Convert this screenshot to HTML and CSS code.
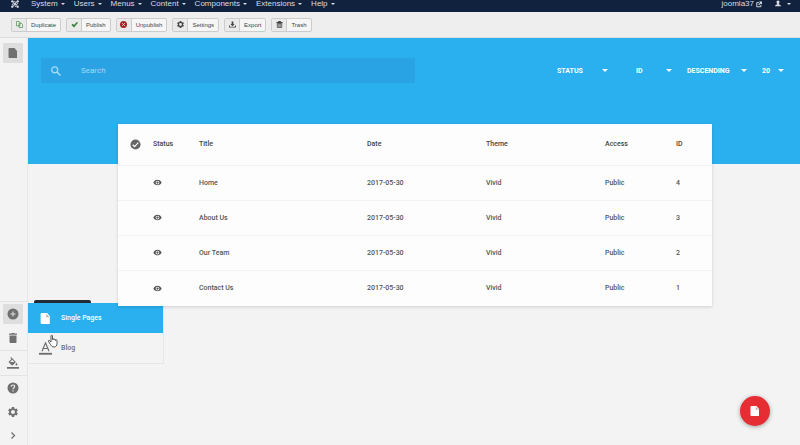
FILE: index.html
```html
<!DOCTYPE html>
<html lang="en">
<head>
    <meta charset="UTF-8">
    <meta name="viewport" content="width=device-width, initial-scale=1.0">
    <title>Pages</title>
    <link rel="stylesheet" href="styles.css">
</head>
<body>
    <!-- Shared icons -->
    <svg class="sprite" aria-hidden="true">
        <symbol id="icon-file" viewBox="0 0 24 24"><path d="M5 2h10l5 6v14H5c-1 0-2-1-2-2V4c0-1 1-2 2-2z"/><path class="fold" d="M13.500 3.500v6H19z"/></symbol>
        <symbol id="icon-eye" viewBox="0 0 24 24"><path fill-rule="evenodd" d="M12 4.500C7 4.500 2.700 7.600 1 12c1.700 4.400 6 7.500 11 7.500s9.300-3.100 11-7.500c-1.700-4.400-6-7.500-11-7.500zM12 17a5 5 0 1 1 0-10 5 5 0 0 1 0 10zm0-8a3 3 0 1 0 0 6 3 3 0 0 0 0-6z"/></symbol>
        <symbol id="icon-trash" viewBox="0 0 24 24"><path d="M5 7v13a2 2 0 0 0 2 2h10a2 2 0 0 0 2-2V7zM20 3h-4.500l-1-1h-5l-1 1H4v2.500h16z"/></symbol>
        <symbol id="icon-gear" viewBox="0 0 24 24"><path fill-rule="evenodd" d="M19.400 13c.1-.7.1-1.300 0-2l2.100-1.600c.2-.2.3-.4.1-.6l-2-3.500c-.1-.2-.4-.3-.6-.2l-2.500 1c-.5-.4-1.100-.7-1.700-1l-.4-2.600c0-.3-.2-.5-.4-.5h-4c-.2 0-.4.2-.4.500l-.4 2.600c-.6.3-1.200.6-1.700 1l-2.500-1c-.2-.1-.5 0-.6.2l-2 3.500c-.2.2-.1.4.1.6L4.600 11c-.1.7-.1 1.300 0 2l-2.100 1.600c-.2.2-.3.4-.1.6l2 3.500c.1.2.4.3.6.2l2.500-1c.5.4 1.100.7 1.700 1l.4 2.600c0 .3.2.5.4.5h4c.2 0 .4-.2.4-.5l.4-2.600c.6-.3 1.200-.6 1.700-1l2.500 1c.2.1.5 0 .6-.2l2-3.500c.2-.2.1-.4-.1-.6zM12 16a4 4 0 1 1 0-8 4 4 0 0 1 0 8z"/></symbol>
    </svg>

    <nav class="navbar">
        <a class="brand" href="#" aria-label="Joomla">
            <svg viewBox="0 0 24 24"><path d="M7 17l-3-4 4-4 8 8M17 7l3 4-4 4-8-8M7 7l4-3 4 4-8 8M17 17l-4 3-4-4 8-8" fill="none" stroke="currentColor" stroke-width="3"/><circle cx="4" cy="4" r="3.500"/><circle cx="20" cy="4" r="3.500"/><circle cx="4" cy="20" r="3.500"/><circle cx="20" cy="20" r="3.500"/></svg>
        </a>
        <ul class="menu">
            <li><a class="caret" href="#">System</a></li>
            <li><a class="caret" href="#">Users</a></li>
            <li><a class="caret" href="#">Menus</a></li>
            <li><a class="caret" href="#">Content</a></li>
            <li><a class="caret" href="#">Components</a></li>
            <li><a class="caret" href="#">Extensions</a></li>
            <li><a class="caret" href="#">Help</a></li>
        </ul>
        <a class="site-link" href="#">joomla37
            <svg viewBox="0 0 16 16"><path d="M8 3H2v11h11V9" fill="none" stroke="currentColor" stroke-width="2.500"/><path d="M8 0h8v8l-3-3-5 5-2-2 5-5z"/></svg>
        </a>
        <a class="user-link caret" href="#" aria-label="User menu">
            <svg viewBox="0 0 16 16"><path d="M8 0c3 0 4 2 4 4 0 2-1 4-2 5v1c2 1 6 2 6 5H0c0-3 4-4 6-5V9C5 8 4 6 4 4c0-2 1-4 4-4z"/></svg>
        </a>
    </nav>

    <div class="toolbar">
        <button class="tool"><span class="tool-icon green"><svg viewBox="0 0 16 16"><path d="M1 1h6l2 3v7H1zM7 5h5l3 3v7H7z" fill="#eee" stroke="currentColor" stroke-width="1.500"/></svg></span><span class="tool-text">Duplicate</span></button>
        <button class="tool"><span class="tool-icon green"><svg viewBox="0 0 16 16"><path d="M1 9l3-3 3 3 6-7 3 2-9 11z"/></svg></span><span class="tool-text">Publish</span></button>
        <button class="tool"><span class="tool-icon red"><svg viewBox="0 0 16 16"><circle cx="8" cy="8" r="8"/><path d="M5 5l6 6M11 5l-6 6" stroke="#eee" stroke-width="2"/></svg></span><span class="tool-text">Unpublish</span></button>
        <button class="tool"><span class="tool-icon"><svg viewBox="2 2 20 20"><use href="#icon-gear" width="24" height="24"/></svg></span><span class="tool-text">Settings</span></button>
        <button class="tool"><span class="tool-icon"><svg viewBox="0 0 16 16"><path d="M6 1h4v6h3l-5 5-5-5h3zM0 10h2v3h12v-3h2v5H0z"/></svg></span><span class="tool-text">Export</span></button>
        <button class="tool"><span class="tool-icon"><svg viewBox="0 0 16 16"><path d="M1 2h4V0h6v2h4v3H1z"/><path d="M3 6v9h10V6zM6.500 6v8M9.500 6v8" fill="none" stroke="currentColor" stroke-width="1.800"/></svg></span><span class="tool-text">Trash</span></button>
    </div>

    <div class="layout">
        <aside class="sidebar">
            <button class="side-button active" aria-label="Pages"><svg viewBox="0 0 24 24"><use href="#icon-file"/></svg></button>

            <div class="side-tools">
                <div class="side-row">
                    <button class="side-button active" aria-label="Add page"><svg viewBox="0 0 24 24"><circle cx="12" cy="12" r="11"/><path d="M12 7v10M7 12h10" stroke="#dedede" stroke-width="2.200"/></svg></button>
                </div>
                <div class="side-row">
                    <button class="side-button" aria-label="Trash"><svg viewBox="0 0 24 24"><use href="#icon-trash"/></svg></button>
                </div>
                <div class="side-row lined">
                    <button class="side-button" aria-label="Theme colour"><svg viewBox="0 0 24 24"><path d="M0 20h24v3.500H0z"/><path fill-rule="evenodd" d="M8 0L6.600 1.400 9 3.800 3.800 9c-.6.6-.6 1.500 0 2.100l5.500 5.500c.6.6 1.500.6 2.100 0l5.500-5.500c.6-.6.6-1.500 0-2.100zM6 10l4.500-4.500L15 10zM19 11.500s-2 2.200-2 3.500a2 2 0 0 0 4 0c0-1.300-2-3.500-2-3.500z"/></svg></button>
                </div>
                <div class="side-row">
                    <button class="side-button" aria-label="Help"><svg viewBox="0 0 24 24"><circle cx="12" cy="12" r="11"/><path d="M8.500 9.500c0-5 7-4.500 7-.5 0 2.500-3.500 2.700-3.500 5.500M12 16.500v2.500" fill="none" stroke="#f3f3f3" stroke-width="2.200"/></svg></button>
                </div>
                <div class="side-row">
                    <button class="side-button" aria-label="Settings"><svg viewBox="0 0 24 24"><use href="#icon-gear"/></svg></button>
                </div>
                <div class="side-row last">
                    <button class="side-button" aria-label="Expand"><svg viewBox="0 0 24 24"><path d="M9 7l6 6-6 6" fill="none" stroke="currentColor" stroke-width="2.500"/></svg></button>
                </div>

                <div class="tooltip"></div>
                <div class="add-menu">
                    <a class="add-item selected" href="#"><svg viewBox="0 0 24 24"><use href="#icon-file"/></svg>Single Pages</a>
                    <a class="add-item" href="#"><svg viewBox="0 0 24 24"><path d="M0 20h24v3.500H0z"/><path d="M5.500 17L12 1.500 18.500 17M8 12h8" fill="none" stroke="currentColor" stroke-width="2.200"/></svg>Blog</a>
                    <svg class="pointer" viewBox="0 0 20 26"><path d="M6 15V3c0-2 3-2 3 0v7c0-2 3-2 3 0v1c0-2 3-2 3 0v1c0-2 3-2 3 0v6c0 4-2 7-6 7-4 0-5-2-7-5l-4-6c-1-2 1-3 3-1z" fill="#fff" stroke="#444" stroke-width="1.800"/></svg>
                </div>
            </div>
        </aside>

        <main class="content">
            <div class="hero">
                <label class="search">
                    <svg viewBox="0 0 24 24"><circle cx="9.500" cy="9.500" r="6" fill="none" stroke="currentColor" stroke-width="2.500"/><path d="M14 14l7 7" stroke="currentColor" stroke-width="3"/></svg>
                    <input type="text" placeholder="Search" aria-label="Search">
                </label>
                <div class="filters">
                    <div class="filter status"><select aria-label="Status"><option>STATUS</option></select></div>
                    <div class="filter order"><select aria-label="Order by"><option>ID</option></select></div>
                    <div class="filter direction"><select aria-label="Direction"><option>DESCENDING</option></select></div>
                    <div class="filter limit"><select aria-label="Limit"><option>20</option></select></div>
                </div>
            </div>

            <table class="pages">
                <thead>
                    <tr>
                        <th class="col-check"><button class="check-all" aria-label="Select all"><svg viewBox="0 0 24 24"><circle cx="12" cy="12" r="11"/><path d="M6 12.500l4 4 8-8.500" fill="none" stroke="#fff" stroke-width="2.500"/></svg></button></th>
                        <th class="col-status">Status</th>
                        <th>Title</th>
                        <th class="col-date">Date</th>
                        <th class="col-theme">Theme</th>
                        <th class="col-access">Access</th>
                        <th class="col-id">ID</th>
                    </tr>
                </thead>
                <tbody>
                    <tr>
                        <td></td>
                        <td><svg class="eye"><use href="#icon-eye"/></svg></td>
                        <td>Home</td>
                        <td>2017-05-30</td>
                        <td>Vivid</td>
                        <td>Public</td>
                        <td>4</td>
                    </tr>
                    <tr>
                        <td></td>
                        <td><svg class="eye"><use href="#icon-eye"/></svg></td>
                        <td>About Us</td>
                        <td>2017-05-30</td>
                        <td>Vivid</td>
                        <td>Public</td>
                        <td>3</td>
                    </tr>
                    <tr>
                        <td></td>
                        <td><svg class="eye"><use href="#icon-eye"/></svg></td>
                        <td>Our Team</td>
                        <td>2017-05-30</td>
                        <td>Vivid</td>
                        <td>Public</td>
                        <td>2</td>
                    </tr>
                    <tr>
                        <td></td>
                        <td><svg class="eye"><use href="#icon-eye"/></svg></td>
                        <td>Contact Us</td>
                        <td>2017-05-30</td>
                        <td>Vivid</td>
                        <td>Public</td>
                        <td>1</td>
                    </tr>
                </tbody>
            </table>
        </main>
    </div>

    <button class="new-page" aria-label="New page"><svg viewBox="0 0 24 24"><use href="#icon-file"/></svg></button>
</body>
</html>
```
FILE: styles.css
```css
* {
    box-sizing: border-box;
}

body {
    font-family: Roboto, Arial, sans-serif;
    font-size: 7px;
    margin: 0;
    min-height: 100vh;
    display: flex;
    flex-direction: column;
    background-color: #f3f3f3;
    color: #555;
}

svg {
    display: block;
    fill: currentColor;
}

button {
    border: none;
    padding: 0;
    background: none;
    color: inherit;
    cursor: pointer;
}

a {
    color: inherit;
    text-decoration: none;
}

.sprite {
    position: absolute;
    width: 0;
    height: 0;
}

.fold {
    fill: rgba(120, 120, 120, 0.6);
}

/* Top navigation */
.navbar {
    display: flex;
    align-items: flex-start;
    height: 12px;
    padding: 0 9px 0 10px;
    overflow: hidden;
    background-color: #10223e;
    color: #d9dde4;
    font-family: "Liberation Sans", Arial, sans-serif;
    font-size: 8px;
    line-height: 8px;
}

.brand svg {
    width: 10px;
    height: 8px;
}

.menu {
    display: flex;
    gap: 9px;
    list-style-type: none;
    margin: 0 auto 0 11px;
    padding: 0;
}

.caret {
    display: flex;
    align-items: center;
    gap: 3px;
}

.caret::after {
    content: "";
    border: 2px solid transparent;
    border-top-color: currentColor;
    border-bottom: none;
}

.site-link {
    display: flex;
    align-items: center;
    gap: 2px;
    margin-right: 13px;
}

.site-link svg,
.user-link svg {
    width: 6px;
    height: 7px;
}

.user-link {
    gap: 6px;
}

/* Toolbar */
.toolbar {
    display: flex;
    align-items: center;
    gap: 5px;
    height: 26px;
    padding: 0 11px;
    background-color: #eee;
    border-bottom: 1px solid #ddd;
}

.tool {
    display: flex;
    height: 14px;
    border: 1px solid #ccc;
    border-radius: 2px;
    background-color: #f6f6f6;
    color: #444;
    font-family: "Liberation Sans", Arial, sans-serif;
    font-size: 6px;
    line-height: 12px;
}

.tool-icon {
    display: flex;
    align-items: center;
    justify-content: center;
    width: 15px;
    height: 12px;
    background-color: #eaeaea;
    border-right: 1px solid #ccc;
}

.tool-icon svg {
    width: 7px;
    height: 7px;
}

.tool-text {
    padding: 0 4px;
}

.green {
    color: #378137;
}

.red {
    color: #a82226;
}

/* Sidebar */
.layout {
    display: flex;
    flex: 1;
}

.sidebar {
    display: flex;
    flex-direction: column;
    width: 28px;
    padding-top: 5px;
    border-right: 1px solid #e6e6e6;
    color: #707070;
}

.side-button {
    display: flex;
    align-items: center;
    justify-content: center;
    width: 20px;
    height: 20px;
    margin-left: 3px;
    border-radius: 1px;
}

.side-button svg {
    width: 12px;
    height: 12px;
}

.side-button.active {
    background-color: #dedede;
}

.side-tools {
    position: relative;
    margin-top: auto;
    border-top: 1px solid #e3e3e3;
}

.side-row {
    display: flex;
    align-items: center;
    height: 24px;
}

.side-row.lined {
    box-sizing: content-box;
    border: solid #e3e3e3;
    border-width: 1px 0;
}

.side-row.last {
    height: 21px;
}

.tooltip {
    position: absolute;
    top: -2px;
    left: 34px;
    width: 57px;
    height: 12px;
    border-radius: 2px;
    background-color: #222b33;
}

.add-menu {
    position: absolute;
    top: 1px;
    left: 28px;
    width: 136px;
    background-color: #f3f3f3;
    border: solid #e6e6e6;
    border-width: 0 1px 1px 0;
}

.add-item {
    display: flex;
    align-items: center;
    gap: 9px;
    height: 30px;
    padding-left: 11px;
    font-weight: 500;
}

.add-item svg {
    width: 13px;
    height: 13px;
}

.add-item.selected {
    background-color: #2aafef;
    color: #fff;
}

.pointer {
    position: absolute;
    top: 31px;
    left: 20px;
    width: 10px;
    height: 14px;
}

/* Search and filters */
.content {
    flex: 1;
}

.hero {
    display: flex;
    align-items: flex-start;
    height: 126px;
    padding: 20px 16px 0 13px;
    background-color: #2aafef;
    color: #fff;
}

.search {
    display: flex;
    align-items: center;
    flex: 1;
    gap: 19px;
    height: 25px;
    padding-left: 9px;
    background-color: #29a3e3;
    color: #a5dcf8;
}

.search svg {
    width: 12px;
    height: 12px;
}

.search input {
    flex: 1;
    min-width: 0;
    padding: 0;
    border: none;
    outline: none;
    background: none;
    color: #fff;
    font-family: inherit;
    font-size: 8px;
}

.search input::placeholder {
    color: #a0daf8;
}

.filters {
    display: flex;
    align-items: center;
    gap: 15px;
    height: 25px;
    margin-left: 142px;
}

.filter {
    display: flex;
    align-items: center;
}

.filter::after {
    content: "";
    border: 3px solid transparent;
    border-top-color: #fff;
    border-bottom: none;
}

.filter select {
    flex: 1;
    min-width: 0;
    padding: 0;
    border: none;
    appearance: none;
    background: none;
    color: #fff;
    font-family: inherit;
    font-size: 7px;
    font-weight: 700;
}

.filter.status {
    width: 51px;
    margin-right: 13px;
}

.filter.order {
    width: 36px;
}

.filter.direction {
    width: 60px;
}

.filter.limit {
    width: 22px;
}

/* Pages table */
.pages {
    position: relative;
    width: calc(100% - 178px);
    margin: -40px 88px 0 90px;
    table-layout: fixed;
    border-collapse: collapse;
    background-color: #fdfdfd;
    box-shadow: 0 1px 3px rgba(0, 0, 0, 0.15);
    font-weight: 500;
}

.pages th,
.pages td {
    padding: 0;
    text-align: left;
    font-weight: 500;
}

.pages th {
    height: 41px;
    color: #444;
}

.pages td {
    height: 35px;
    border-top: 1px solid #f3f3f3;
}

.pages tr:last-child td {
    height: 36px;
}

.col-check {
    width: 35px;
}

.col-status {
    width: 46px;
}

.col-date {
    width: 119px;
}

.col-theme {
    width: 119px;
}

.col-access {
    width: 71px;
}

.col-id {
    width: 36px;
}

.check-all {
    display: block;
    margin-left: 12px;
    color: #666;
}

.check-all svg {
    width: 11px;
    height: 11px;
}

.eye {
    width: 9px;
    height: 9px;
}

/* Floating action button */
.new-page {
    position: fixed;
    right: 30px;
    bottom: 19px;
    display: flex;
    align-items: center;
    justify-content: center;
    width: 30px;
    height: 30px;
    border-radius: 50%;
    background-color: #e62d33;
    color: #fff;
    box-shadow: 0 1px 4px rgba(0, 0, 0, 0.35);
}

.new-page svg {
    width: 12px;
    height: 12px;
}
```
